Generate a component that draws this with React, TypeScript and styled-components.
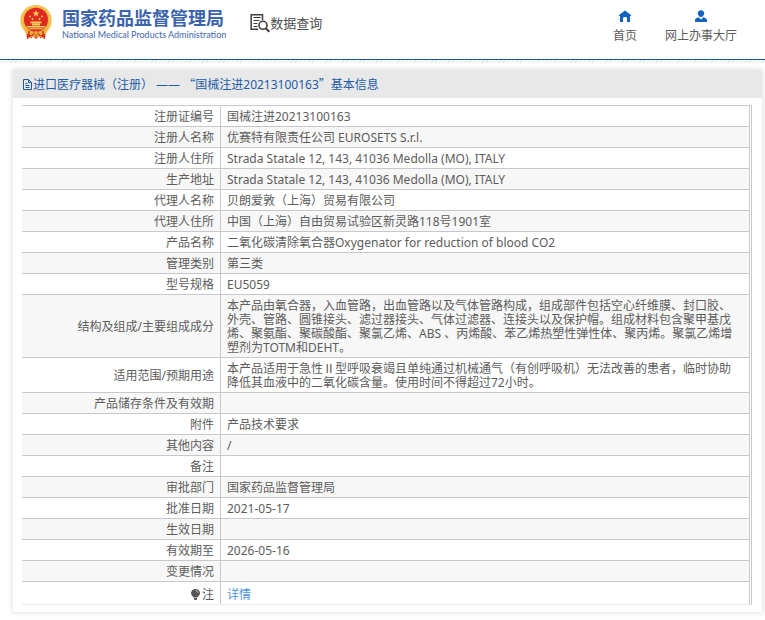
import React from "react";
import styled, { createGlobalStyle } from "styled-components";

const GlobalStyle = createGlobalStyle`
  *, *::before, *::after { box-sizing: border-box; }
  body {
    margin: 0;
    background: #fff;
    color: #5c5c5c;
    font: 12px/14px "Noto Sans", "Noto Sans CJK SC", sans-serif;
  }
`;

const Header = styled.header`
  display: flex;
  align-items: flex-start;
  height: 60px;
  padding: 0 28px 0 19px;
  border-bottom: 1px solid #1b568f;
`;

const Brand = styled.a`
  display: flex;
  gap: 9px;
  padding-top: 4px;
  color: #3c64ad;
  text-decoration: none;
`;

const BrandText = styled.span`
  display: flex;
  flex-direction: column;
  padding-top: 3px;
`;

const BrandName = styled.strong`
  font: 700 18px/20px "Noto Sans CJK SC", sans-serif;
  white-space: nowrap;
`;

const BrandSub = styled.span`
  font: 400 9px/16px Lato, sans-serif;
  white-space: nowrap;
`;

const Section = styled.a`
  display: flex;
  align-items: center;
  margin: 13px 0 0 24px;
  color: #4c4c50;
  font-size: 13px;
  line-height: 20px;
  text-decoration: none;
  white-space: nowrap;
`;

const Nav = styled.nav`
  display: flex;
  gap: 28px;
  margin-left: auto;
  padding-top: 9px;
`;

const NavLink = styled.a`
  display: flex;
  flex-direction: column;
  align-items: center;
  gap: 4px;
  color: #5c5c5c;
  line-height: 18px;
  text-decoration: none;
  white-space: nowrap;
`;

const Hatch = styled.div`
  height: 3px;
  background: repeating-linear-gradient(135deg, #dce7f4 0 1px, #fff 1px 3px);
`;

const Card = styled.main`
  margin: 7px 3px 8px 13px;
  background: #fff;
  box-shadow: 0 0 5px 1px rgba(0, 0, 0, 0.12);
`;

const CardTitle = styled.h1`
  display: flex;
  align-items: center;
  min-height: 28px;
  margin: 0;
  padding: 1px 9px 0;
  background: #e8e8e8;
  color: #1c5ca8;
  font-size: 12px;
  font-weight: 400;
  line-height: 18px;
  white-space: pre;
`;

const WideQuote = styled.span`
  font-family: "Noto Sans CJK SC", sans-serif;
`;

const CardBody = styled.div`
  padding: 7px 10px 7px 9px;
`;

const TableFrame = styled.div`
  padding-right: 1px;
  border-right: 1px solid #c8c8cc;
`;

const Table = styled.table`
  width: 100%;
  border-collapse: separate;
  border-spacing: 0;
  border-right: 1px solid #c8c8cc;
  border-bottom: 1px solid #ebebeb;
`;

const Row = styled.tr`
  &:nth-child(even) { background: #f7f7f7; }
  &:last-child > * { padding-top: 6px; }
`;

const Label = styled.th`
  width: 199px;
  padding: 4px 6px 2px 0;
  border-top: 1px solid #c8c8cc;
  border-right: 1px solid #c8c8cc;
  font-weight: 400;
  text-align: right;
`;

const Value = styled.td`
  padding: 4px 8px 2px 6px;
  border-top: 1px solid #c8c8cc;
`;

const DetailLink = styled.a`
  color: #4a94e4;
  text-decoration: none;
`;

const InlineIcon = styled.svg`
  vertical-align: -2px;
`;

const Emblem = () => (
  <svg width="34" height="36" viewBox="0 0 34 36" aria-hidden="true">
    <path d="M7 25 8 35 14 32 17 35 20 32 26 35 27 25Z" fill="#d92a20" />
    <circle cx="17" cy="16.5" r="15.6" fill="#efb340" />
    <circle cx="17" cy="16.5" r="14.2" fill="none" stroke="#f8d15f" strokeWidth="1.4" strokeDasharray="2 1" />
    <circle cx="17" cy="15.8" r="12" fill="#df281e" />
    <path d="m17 6 1 2.4h2.5l-2 1.5.8 2.5-2.3-1.5-2.2 1.5.8-2.5-2.1-1.5H16Z" fill="#f8d15f" />
    <g fill="#f8d15f">
      <circle cx="11" cy="12.5" r=".9" />
      <circle cx="13.5" cy="15" r=".9" />
      <circle cx="20.5" cy="15" r=".9" />
      <circle cx="23" cy="12.5" r=".9" />
      <path d="M12 17.5h10l1 1.8H11Zm1 2h8v2h-8ZM8 22h18v1.5H8Zm2 2.3h14v1H10Z" />
    </g>
    <path d="M5 24q5 5 10 4l2-2 2 2q5 1 10-4l-2 6-6 1-4-2-4 2-6-1Z" fill="#f3b53b" />
    <path d="M10 27v5m14-5v5M14 30l-2 4m8-4 2 4" stroke="#d92a20" strokeWidth="1.5" />
    <circle cx="17" cy="29" r="2.2" fill="#efb340" stroke="#d92a20" strokeWidth=".8" />
    <path d="m9 34 5-2 3 1 3-1 5 2" fill="none" stroke="#e8a32f" />
  </svg>
);

const SearchDocument = () => (
  <svg width="20" height="20" viewBox="0 0 20 20" fill="none" stroke="#3f3f43" aria-hidden="true">
    <path d="M12.5 7V1.7H1.2v14.6h7" strokeWidth="1.5" />
    <path d="M3.5 4.5h7M3.5 7.5h6M3.5 10.5h4M3.5 13.5h4" />
    <circle cx="13" cy="12.3" r="4" strokeWidth="1.6" fill="#fff" />
    <path d="m16 15.5 3.3 3.3" strokeWidth="2" />
  </svg>
);

const HomeIcon = () => (
  <svg width="14" height="14" viewBox="0 0 14 14" aria-hidden="true">
    <path d="M7 1.4 1 6.1V7h1v6h3V9.3Q5 8 7 8t2 1.3V13h3V7h1v-.9Z" fill="#1463be" />
  </svg>
);

const PersonIcon = () => (
  <svg width="14" height="14" viewBox="0 0 14 14" fill="#1463be" aria-hidden="true">
    <path d="M7 1.2c2 0 3.2 1.3 3.2 3.1S8.8 8 7 8 3.8 6.1 3.8 4.3 5 1.2 7 1.2Z" />
    <path d="M1 13v-1.7Q1 9 4.7 8.2L7 10.5l2.3-2.3Q13 9 13 11.3V13Z" />
  </svg>
);

const DocumentIcon = () => (
  <svg width="11" height="13" viewBox="0 0 11 13" fill="none" stroke="#1c5ca8" aria-hidden="true">
    <path d="M1.5 1.5h5l3 3v7h-8ZM6.5 1.5v3h3M3.5 5.5h2M3.5 7.5h4M3.5 9.5h4" />
  </svg>
);

const BulbIcon = () => (
  <InlineIcon width="12" height="13" viewBox="0 0 12 13" aria-hidden="true">
    <path d="M5.5 1C8 1 10 2.7 10 5S8 8.5 7.3 9.5H3.7C3 8.5 1 7.3 1 5S3 1 5.5 1ZM4 10h3v1.2L6.3 12H4.7L4 11.2Z" fill="#555" />
    <path d="M5.6 2.5q2.2.2 2.4 2.3" fill="none" stroke="#ddd" strokeWidth=".8" />
  </InlineIcon>
);

type Entry = { label: React.ReactNode; value?: React.ReactNode };

const entries: Entry[] = [
  { label: "注册证编号", value: "国械注进20213100163" },
  { label: "注册人名称", value: "优赛特有限责任公司 EUROSETS S.r.l." },
  { label: "注册人住所", value: "Strada Statale 12, 143, 41036 Medolla (MO), ITALY" },
  { label: "生产地址", value: "Strada Statale 12, 143, 41036 Medolla (MO), ITALY" },
  { label: "代理人名称", value: "贝朗爱敦（上海）贸易有限公司" },
  { label: "代理人住所", value: "中国（上海）自由贸易试验区新灵路118号1901室" },
  { label: "产品名称", value: "二氧化碳清除氧合器Oxygenator for reduction of blood CO2" },
  { label: "管理类别", value: "第三类" },
  { label: "型号规格", value: "EU5059" },
  {
    label: "结构及组成/主要组成成分",
    value:
      "本产品由氧合器，入血管路，出血管路以及气体管路构成，组成部件包括空心纤维膜、封口胶、外壳、管路、圆锥接头、滤过器接头、气体过滤器、连接头以及保护帽。组成材料包含聚甲基戊烯、聚氨酯、聚碳酸酯、聚氯乙烯、ABS 、丙烯酸、苯乙烯热塑性弹性体、聚丙烯。聚氯乙烯增塑剂为TOTM和DEHT。",
  },
  {
    label: "适用范围/预期用途",
    value:
      "本产品适用于急性Ⅱ型呼吸衰竭且单纯通过机械通气（有创呼吸机）无法改善的患者，临时协助降低其血液中的二氧化碳含量。使用时间不得超过72小时。",
  },
  { label: "产品储存条件及有效期" },
  { label: "附件", value: "产品技术要求" },
  { label: "其他内容", value: "/" },
  { label: "备注" },
  { label: "审批部门", value: "国家药品监督管理局" },
  { label: "批准日期", value: "2021-05-17" },
  { label: "生效日期" },
  { label: "有效期至", value: "2026-05-16" },
  { label: "变更情况" },
  { label: <><BulbIcon />注</>, value: <DetailLink href="#detail">详情</DetailLink> },
];

export default function App() {
  return (
    <>
      <GlobalStyle />
      <Header>
        <Brand href="#home">
          <Emblem />
          <BrandText>
            <BrandName>国家药品监督管理局</BrandName>
            <BrandSub>National Medical Products Administration</BrandSub>
          </BrandText>
        </Brand>
        <Section href="#query">
          <SearchDocument />
          数据查询
        </Section>
        <Nav>
          <NavLink href="#index"><HomeIcon />首页</NavLink>
          <NavLink href="#services"><PersonIcon />网上办事大厅</NavLink>
        </Nav>
      </Header>
      <Hatch />
      <Card>
        <CardTitle>
          <DocumentIcon />
          <span>
            进口医疗器械（注册） —— <WideQuote>“</WideQuote>国械注进20213100163<WideQuote>”</WideQuote>基本信息
          </span>
        </CardTitle>
        <CardBody>
          <TableFrame>
            <Table>
              <tbody>
                {entries.map((entry, i) => (
                  <Row key={i}>
                    <Label scope="row">{entry.label}</Label>
                    <Value>{entry.value}</Value>
                  </Row>
                ))}
              </tbody>
            </Table>
          </TableFrame>
        </CardBody>
      </Card>
    </>
  );
}
